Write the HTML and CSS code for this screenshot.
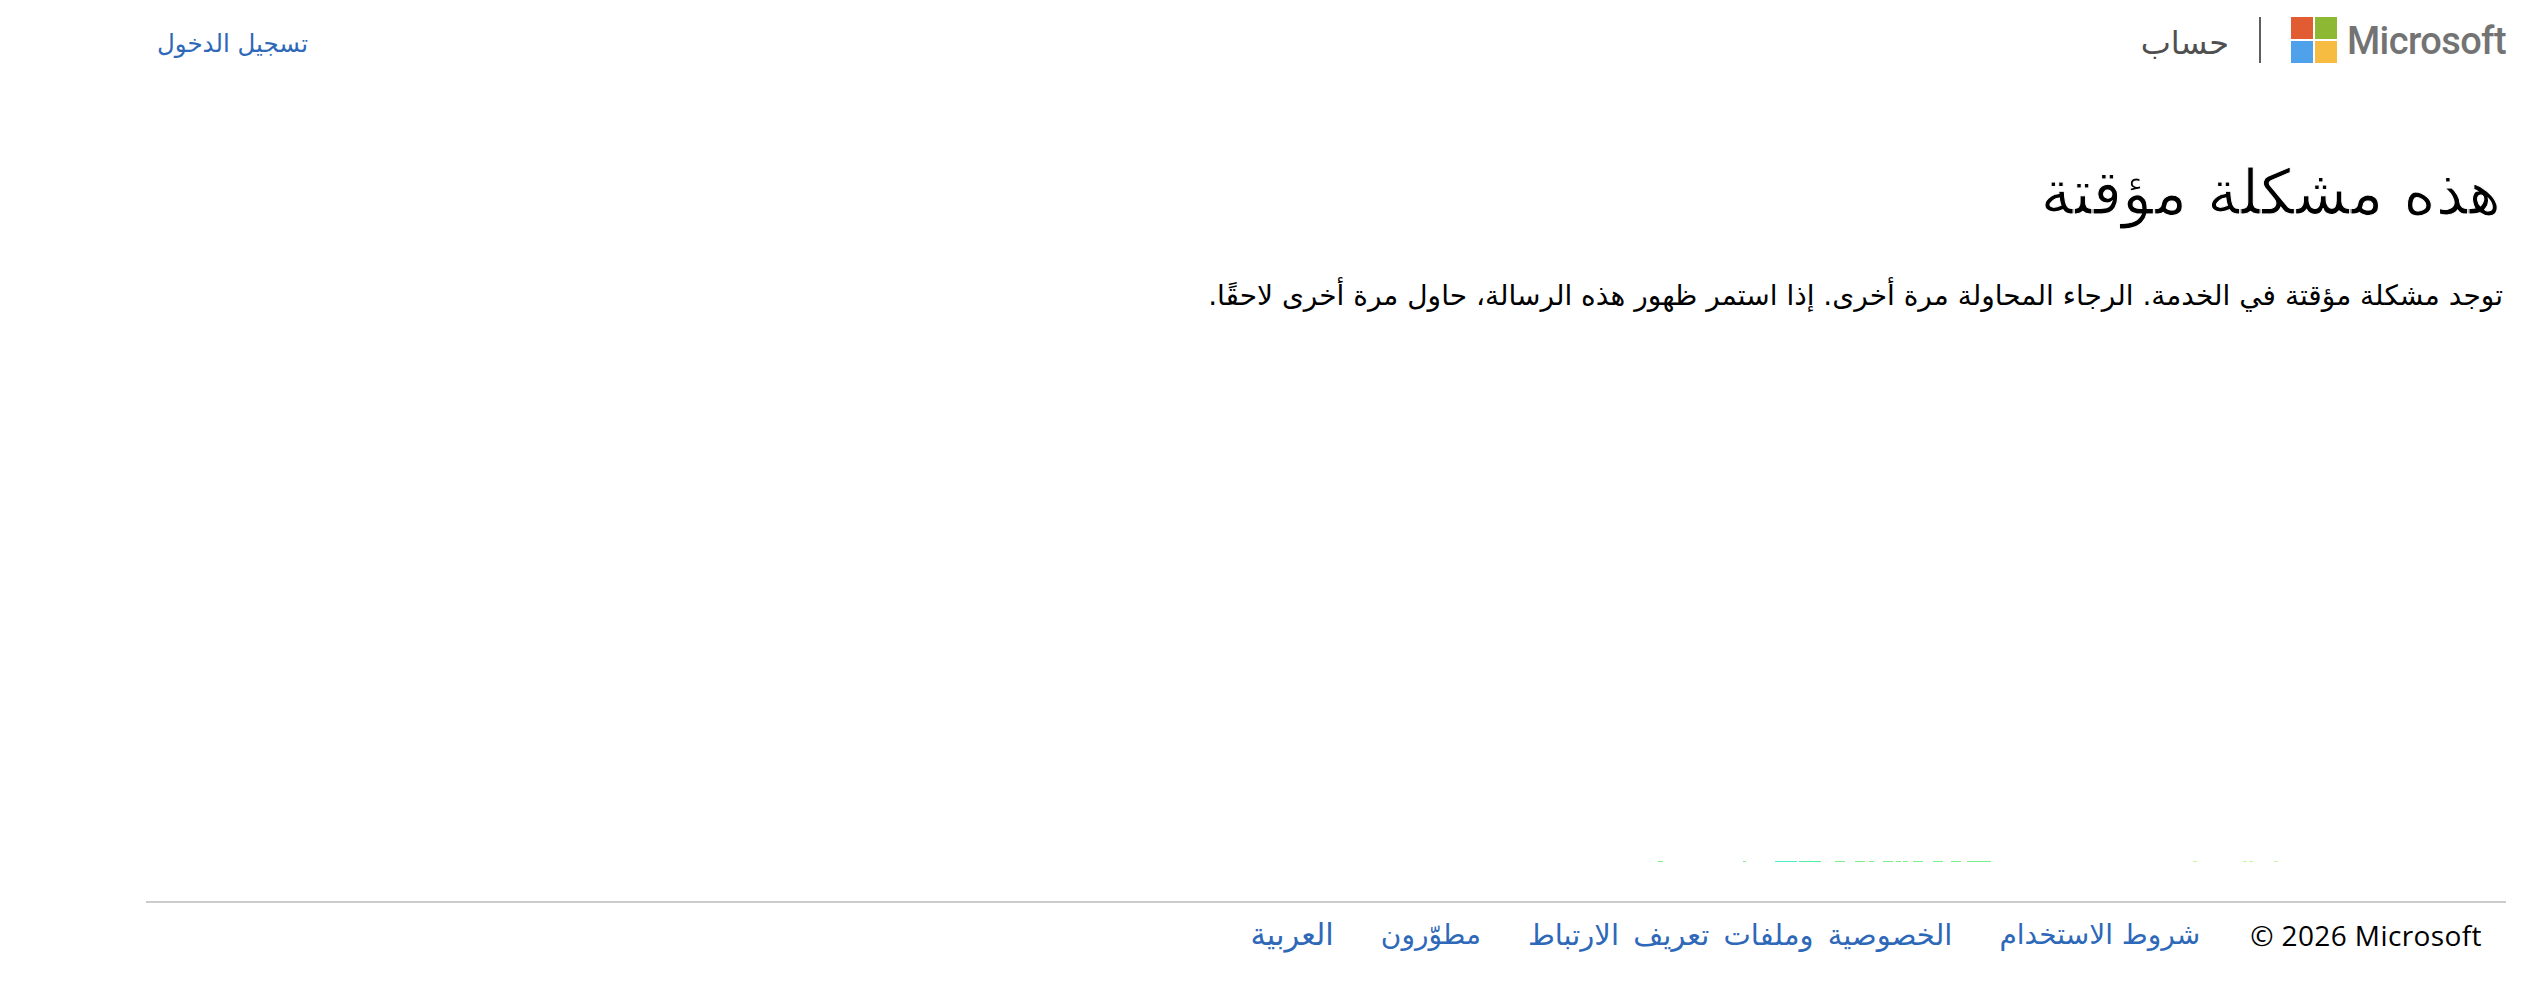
FILE: index.html
```html
<!DOCTYPE html>
<html lang="ar" dir="rtl">
<head>
<meta charset="utf-8">
<title>هذه مشكلة مؤقتة</title>
<link rel="stylesheet" href="styles.css">
</head>
<body>
<div class="page">
  <header class="topbar">
    <div class="brand">
      <span class="logo" dir="ltr">
        <svg class="logo-mark" width="46" height="46" viewBox="0 0 46 46" aria-hidden="true">
          <rect x="0" y="0" width="22" height="22" fill="#e25c33"/>
          <rect x="24" y="0" width="22" height="22" fill="#8db834"/>
          <rect x="0" y="24" width="22" height="22" fill="#4ea1ea"/>
          <rect x="24" y="24" width="22" height="22" fill="#f5bc41"/>
        </svg>
        <span class="logo-word">Microsoft</span>
      </span>
      <span class="sep"></span>
      <span class="account">حساب</span>
    </div>
    <a class="signin" href="#">تسجيل الدخول</a>
  </header>
  <main class="content">
    <h1>هذه مشكلة مؤقتة</h1>
    <p>توجد مشكلة مؤقتة في الخدمة. الرجاء المحاولة مرة أخرى. إذا استمر ظهور هذه الرسالة، حاول مرة أخرى لاحقًا.</p>
    <svg class="glitch" width="2360" height="1" viewBox="0 0 2360 1" aria-hidden="true">
      <g fill="#7cf08a">
        <rect x="1512" width="5" height="1"/>
        <rect x="1597" width="3" height="1"/>
        <rect x="1629" width="22" height="1" fill="#4df0c8"/>
        <rect x="1653" width="22" height="1" fill="#50f0a0"/>
        <rect x="1689" width="10" height="1"/>
        <rect x="1709" width="10" height="1"/>
        <rect x="1723" width="5" height="1"/>
        <rect x="1737" width="10" height="1"/>
        <rect x="1750" width="5" height="1"/>
        <rect x="1757" width="5" height="1"/>
        <rect x="1767" width="10" height="1"/>
        <rect x="1787" width="10" height="1"/>
        <rect x="1805" width="10" height="1"/>
        <rect x="1821" width="24" height="1"/>
      </g>
      <g fill="#c8f5a0">
        <rect x="2047" width="4" height="1"/>
        <rect x="2097" width="4" height="1"/>
        <rect x="2103" width="4" height="1"/>
        <rect x="2128" width="4" height="1"/>
      </g>
    </svg>
  </main>
  <footer class="footer">
    <span class="copy" dir="ltr">© 2026 Microsoft</span>
    <a href="#">شروط الاستخدام</a>
    <a class="link-wide" href="#">الخصوصية وملفات تعريف الارتباط</a>
    <a href="#">مطوّرون</a>
    <a class="link-lang" href="#">العربية</a>
  </footer>
</div>
</body>
</html>
```
FILE: styles.css
```css
* { box-sizing: border-box; }
html, body { margin: 0; height: 100%; background: #fff; }
body { font-family: "DejaVu Sans", "Noto Sans", sans-serif; color: #000; }
a { text-decoration: none; color: #2e68b8; }
.page { height: 983px; display: flex; flex-direction: column; padding: 0 34px 0 146px; }
.topbar { height: 80px; padding-top: 17px; display: flex; justify-content: space-between; align-items: flex-start; }
.brand { display: flex; align-items: center; height: 46px; }
.logo { display: flex; align-items: center; gap: 10px; }
.logo-word { font-family: Roboto, sans-serif; font-weight: 500; font-size: 38px; letter-spacing: -0.6px; color: #737373; line-height: 46px; padding-top: 2px; }
.sep { width: 2px; height: 46px; background: #5e5e5e; margin: 0 30px; }
.account { font-size: 32px; color: #505050; line-height: 46px; padding-top: 5px; }
.signin { font-size: 24.5px; line-height: 46px; margin-left: 11px; padding-top: 4px; }
.content { flex: 1; display: flex; flex-direction: column; }
h1 { margin: 78px 5px 0 0; font-weight: 400; font-size: 62px; line-height: 70px; -webkit-text-stroke: 1px #fff; }
p { margin: 48px 3px 0 0; font-size: 28px; line-height: 40px; }
.glitch { display: block; margin-top: auto; margin-bottom: 39px; flex: none; }
.footer { border-top: 2px solid #ccc; height: 82px; display: flex; align-items: flex-start; gap: 47px; padding: 12px 24px 0 0; font-size: 28px; line-height: 40px; }
.copy { font-family: "Open Sans", sans-serif; font-size: 28px; letter-spacing: 0.4px; margin-left: 3px; }
.link-wide { font-size: 29px; word-spacing: 5px; }
.link-lang { font-size: 30.5px; }
```
